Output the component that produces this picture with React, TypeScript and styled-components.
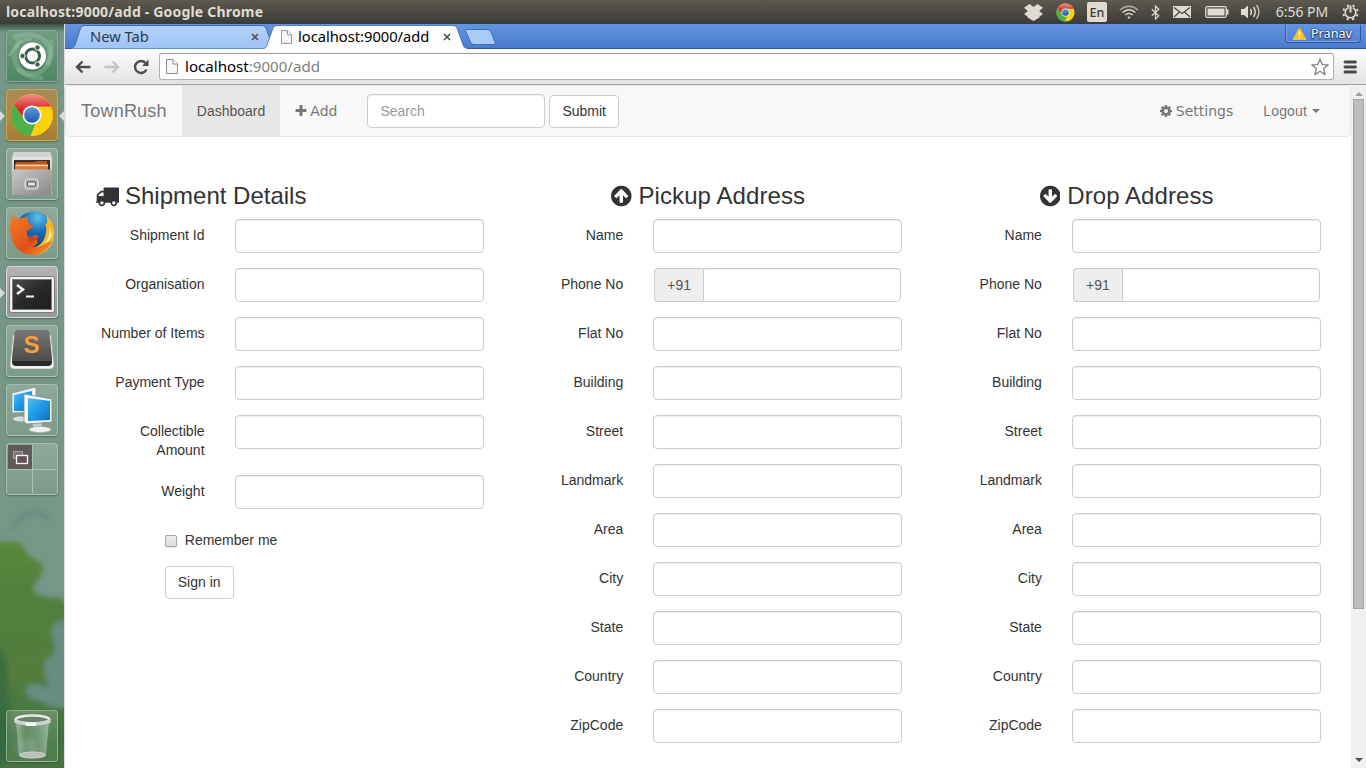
import React from 'react';
import styled, { createGlobalStyle } from 'styled-components';

const ui = `'Noto Sans', 'Open Sans', sans-serif`;
const web = `'Liberation Sans', Arial, sans-serif`;
const iconFallback = `'DejaVu Sans', sans-serif`;

const GlobalStyle = createGlobalStyle`
  *, *::before, *::after { box-sizing: border-box; }
  html, body { margin: 0; height: 100%; overflow: hidden; }
  body { font-family: ${web}; font-size: 14px; color: #333; background: #fff; }
  svg { display: block; flex: none; }
`;

/* ---------- desktop shell ---------- */

const Desktop = styled.div`
  display: flex;
  flex-direction: column;
  width: 1366px;
  height: 768px;
  overflow: hidden;
`;

const TopPanel = styled.header`
  display: flex;
  align-items: center;
  flex: none;
  height: 24px;
  padding: 0 7px 0 6px;
  background: linear-gradient(#5c594f, #3c3b37);
  color: #dfdbd2;
  font-family: ${ui};
`;

const WindowTitle = styled.div`
  flex: 1;
  font-size: 14px;
  font-weight: 700;
  line-height: 24px;
  letter-spacing: 0.19px;
  white-space: nowrap;
`;

const Indicator = styled.div<{ $w: number; $gap: number }>`
  display: flex;
  justify-content: center;
  flex: none;
  width: ${(p) => p.$w}px;
  margin-left: ${(p) => p.$gap}px;
  white-space: nowrap;
`;

const LangBadge = styled.span`
  width: 20px;
  height: 20px;
  border-radius: 2px;
  background: #dfdbd2;
  color: #3c3b37;
  font-size: 12.5px;
  font-weight: 500;
  line-height: 21px;
  text-align: center;
`;

const Clock = styled.span`
  font-size: 14px;
  line-height: 24px;
`;

const Workspace = styled.div`
  display: flex;
  flex: 1;
  min-height: 0;
`;

const Dock = styled.aside`
  position: relative;
  display: flex;
  flex-direction: column;
  flex: none;
  gap: 7px;
  width: 65px;
  padding: 6px 0 6px 6px;
  border-right: 1px solid #d3dfdb;
  background: #769687;
  overflow: hidden;
`;

const Wallpaper = styled.svg`
  position: absolute;
  inset: 0;
`;

type TileTone = 'dash' | 'gold' | 'silver' | 'plain';
const tones: Record<TileTone, [string, string]> = {
  dash: ['linear-gradient(#719d82, #4d8665)', '#86ac96'],
  gold: ['linear-gradient(#a58b59, #b28a3c 55%, #a17c34)', '#d0a755'],
  silver: ['linear-gradient(#b1b3b4, #95999a)', '#d5d8d8'],
  plain: ['linear-gradient(rgba(255,255,255,.18), rgba(255,255,255,.05))', 'rgba(205,224,214,.5)'],
};

const Tile = styled.div<{ $tone: TileTone; $last?: boolean }>`
  position: relative;
  display: flex;
  align-items: center;
  justify-content: center;
  flex: none;
  width: 52px;
  height: 52px;
  margin-top: ${(p) => (p.$last ? 'auto' : '0')};
  border: 1px solid ${(p) => tones[p.$tone][1]};
  border-radius: 4px;
  background: ${(p) => tones[p.$tone][0]};
  box-shadow: 0 1px 2px rgba(30, 60, 45, 0.45);
`;

const Arrow = styled.i<{ $side: 'left' | 'right' }>`
  position: absolute;
  top: 21px;
  ${(p) => (p.$side === 'left' ? 'left: -7px; border-left: 5px solid #d8dcda;' : 'right: -7px; border-right: 5px solid #d8dcda;')}
  border-top: 5px solid transparent;
  border-bottom: 5px solid transparent;
`;

/* ---------- browser chrome ---------- */

const Browser = styled.section`
  display: flex;
  flex-direction: column;
  flex: 1;
  min-width: 0;
`;

const TabStrip = styled.div`
  display: flex;
  flex: none;
  height: 25px;
  padding-left: 6px;
  background: linear-gradient(#6594df, #4a7bce 94%, #2f599f 97%);
  font-family: ${ui};
`;

const Tab = styled.div<{ $w: number; $overlap: number; $pad: number; $active?: boolean }>`
  position: relative;
  display: flex;
  align-items: center;
  flex: none;
  width: ${(p) => p.$w}px;
  height: 25px;
  margin-left: ${(p) => -p.$overlap}px;
  padding: 0 ${(p) => (p.$active ? 17 : 16)}px 0 ${(p) => p.$pad}px;
  color: ${(p) => (p.$active ? '#000' : '#2d3a4d')};
`;

const TabShape = styled.svg`
  position: absolute;
  inset: 0;
`;

const TabTitle = styled.span`
  position: relative;
  flex: 1;
  font-size: 14.7px;
  line-height: 25px;
  white-space: nowrap;
`;

const TabIcon = styled.span`
  position: relative;
  display: flex;
`;

const FavIcon = styled(TabIcon)`
  margin-right: 6px;
`;

const NewTabButton = styled.svg`
  margin-left: -3px;
`;

const ProfileBadge = styled.div`
  display: flex;
  align-items: center;
  gap: 4px;
  width: 76px;
  height: 18px;
  margin: 1px 5px 0 auto;
  padding: 0 6px;
  border: 1px solid #2f5aa6;
  border-top: 0;
  border-radius: 0 0 4px 4px;
  box-shadow: inset 0 -1px 0 rgba(255, 255, 255, 0.25), inset 1px 0 0 rgba(255, 255, 255, 0.2);
  color: #fff;
  font-size: 12.6px;
  line-height: 20px;
  text-shadow: 0 0 1px #1b2c4c, 0 0 2px #1b2c4c, 0 1px 1px #1b2c4c;
`;

const Toolbar = styled.div`
  display: flex;
  align-items: center;
  flex: none;
  height: 36px;
  padding: 0 9px 0 10px;
  border-bottom: 1px solid #a2a2a2;
  background: linear-gradient(#fdfdfd, #e2e2e2);
`;

const NavIcons = styled.div`
  display: flex;
  align-items: center;
  gap: 13px;
  width: 84px;
`;

const Omnibox = styled.div`
  display: flex;
  align-items: center;
  flex: 1;
  height: 27px;
  margin-right: 9px;
  padding: 0 4px 0 6px;
  border: 1px solid #b1b1b1;
  border-top-color: #9c9c9c;
  border-radius: 3px;
  background: #fff;
  font-family: ${ui};
  font-size: 15.1px;
  line-height: 25px;
  color: #808080;
`;

const UrlText = styled.span`
  flex: 1;
  margin-left: 7px;
  b { color: #000; font-weight: 400; }
`;

/* ---------- page ---------- */

const Viewport = styled.div`
  display: flex;
  flex: 1;
  min-height: 0;
`;

const Page = styled.main`
  flex: 1;
  min-width: 0;
  overflow: hidden;
  background: #fff;
  line-height: 19px;
`;

const Scrollbar = styled.div`
  display: flex;
  flex-direction: column;
  align-items: center;
  flex: none;
  width: 15px;
  padding: 7px 0 6px;
  background: #f0f0f0;
`;

const ScrollThumb = styled.div`
  width: 11px;
  height: 510px;
  margin: 3px 0 auto;
  border: 1px solid #a5a5a5;
  background: #bcbcbc;
`;

const ScrollArrow = styled.i<{ $down?: boolean }>`
  border: 4px solid transparent;
  ${(p) => (p.$down ? 'border-bottom: 0; border-top-color: #4f4f4f;' : 'border-top: 0; border-bottom-color: #a0a0a0;')}
`;

const Navbar = styled.nav`
  display: flex;
  align-items: stretch;
  height: 52px;
  padding-right: 15px;
  border: 1px solid #e7e7e7;
  border-radius: 4px;
  background: #f8f8f8;
  color: #777;
`;

const Brand = styled.a`
  padding: 15px;
  font-size: 18px;
  line-height: 20px;
  letter-spacing: 0.22px;
`;

const NavItem = styled.a<{ $active?: boolean; $font?: string; $gap?: number; $spacing?: number }>`
  display: flex;
  align-items: center;
  gap: ${(p) => p.$gap ?? 3}px;
  padding: 0 15px;
  background: ${(p) => (p.$active ? '#e7e7e7' : 'transparent')};
  color: ${(p) => (p.$active ? '#555' : '#777')};
  font-family: ${(p) => p.$font ?? web};
  letter-spacing: ${(p) => p.$spacing ?? 0}px;
`;

const SearchForm = styled.form`
  display: flex;
  gap: 4px;
  margin: 8px auto 0 15px;
`;

const Caret = styled.i`
  margin-left: 2px;
  border: 4px solid transparent;
  border-top-color: #777;
  border-bottom: 0;
`;

const TextInput = styled.input<{ $w?: string }>`
  display: block;
  width: ${(p) => p.$w ?? '100%'};
  min-width: 0;
  height: 34px;
  padding: 6px 12px;
  border: 1px solid #ccc;
  border-radius: 4px;
  outline: 0;
  background: #fff;
  box-shadow: inset 0 1px 1px rgba(0, 0, 0, 0.075);
  font: 14px ${web};
  color: #555;
  &::placeholder { color: #999; opacity: 1; }
`;

const Button = styled.button<{ $top?: number }>`
  height: 33px;
  margin: ${(p) => p.$top ?? 0}px 0 0;
  padding: 0 12px;
  border: 1px solid #ccc;
  border-radius: 4px;
  background: #fff;
  color: #333;
  font: 14px/19px ${web};
`;

const Columns = styled.div`
  display: flex;
  padding: 46px 15px 0;
`;

const Column = styled.section`
  flex: 1 1 0;
  min-width: 0;
`;

const Heading = styled.h3<{ $center?: boolean }>`
  display: flex;
  align-items: center;
  justify-content: ${(p) => (p.$center ? 'center' : 'flex-start')};
  gap: ${(p) => (p.$center ? 7 : 6)}px;
  height: 26px;
  margin: 0 0 10px;
  padding: 0 15px;
  font-size: 24px;
  font-weight: 400;
  line-height: 26px;
  letter-spacing: ${(p) => (p.$center ? 0.08 : 0)}px;
`;

const Group = styled.div`
  display: flex;
  align-items: flex-start;
  margin-bottom: 15px;
`;

const Label = styled.label`
  width: 33.3333%;
  padding: 7px 15px 0;
  text-align: right;
`;

const Field = styled.div`
  width: 66.6667%;
  padding: 0 15px;
`;

const PhoneGroup = styled.div`
  display: flex;
  margin: 0 1px;
  ${TextInput} { border-radius: 0 4px 4px 0; }
`;

const Addon = styled.span`
  flex: none;
  width: 49px;
  height: 34px;
  border: 1px solid #ccc;
  border-right: 0;
  border-radius: 4px 0 0 4px;
  background: #eee;
  color: #555;
  line-height: 32px;
  text-align: center;
`;

const Offset = styled.div`
  margin-bottom: 15px;
  padding-left: calc(16.6667% + 15px);
`;

const CheckLabel = styled.label`
  display: flex;
  align-items: center;
  gap: 8px;
  height: 27px;
  padding-top: 6px;
`;

const Checkbox = styled.input`
  appearance: none;
  width: 12px;
  height: 12px;
  margin: 0;
  border: 1px solid #a5a5a5;
  border-radius: 2px;
  background: linear-gradient(#eee, #dcdcdc);
  box-shadow: 0 1px 1px rgba(0, 0, 0, 0.12);
`;

/* ---------- icons ---------- */

const solid = {
  truck: 'M640 1408q0-52-38-90t-90-38-90 38-38 90 38 90 90 38 90-38 38-90zm-384-512h384v-256h-158q-13 0-22 9l-195 195q-9 9-9 22v30zm1280 512q0-52-38-90t-90-38-90 38-38 90 38 90 90 38 90-38 38-90zm256-1088v1024q0 15-4 26.5t-13.5 18.5-16.5 11.5-23.5 6-22.5 2-25.5 0-22.5-.5q0 106-75 181t-181 75-181-75-75-181h-384q0 106-75 181t-181 75-181-75-75-181h-64q-3 0-22.5.5t-25.5 0-22.5-2-23.5-6-16.5-11.5-13.5-18.5-4-26.5q0-26 19-45t45-19v-320q0-8-.5-35t0-38 2.5-34.5 6.5-37 14-30.5 22.5-30l198-198q19-19 50.5-32t58.5-13h160v-192q0-26 19-45t45-19h1024q26 0 45 19t19 45z',
  up: 'M1412 895q0-27-18-45l-362-362-91-91q-18-18-45-18t-45 18l-91 91-362 362q-18 18-18 45t18 45l91 91q18 18 45 18t45-18l189-189v502q0 26 19 45t45 19h128q26 0 45-19t19-45v-502l189 189q19 19 45 19t45-19l91-91q18-18 18-45zm252 1q0 209-103 385.5t-279.5 279.5-385.5 103-385.5-103-279.5-279.5-103-385.5 103-385.5 279.5-279.5 385.5-103 385.5 103 279.5 279.5 103 385.5z',
  plus: 'M1600 736v192q0 40-28 68t-68 28h-416v416q0 40-28 68t-68 28h-192q-40 0-68-28t-28-68v-416h-416q-40 0-68-28t-28-68v-192q0-40 28-68t68-28h416v-416q0-40 28-68t68-28h192q40 0 68 28t28 68v416h416q40 0 68 28t28 68z',
  cog: 'M1152 896q0-106-75-181t-181-75-181 75-75 181 75 181 181 75 181-75 75-181zm512-109v222q0 12-8 23t-20 13l-185 28q-19 54-39 91 35 50 107 138 10 12 10 25t-9 23q-27 37-99 108t-94 71q-12 0-26-9l-138-108q-44 23-91 38-16 136-29 186-7 28-36 28h-222q-14 0-24.5-8.5t-11.5-21.5l-28-184q-49-16-90-37l-141 107q-10 9-25 9-14 0-25-11-126-114-165-168-7-10-7-23 0-12 8-23 15-21 51-66.5t54-70.5q-27-50-41-99l-183-27q-13-2-21-12.5t-8-23.5v-222q0-12 8-23t19-13l186-28q14-46 39-92-40-57-107-138-10-12-10-24 0-10 9-23 26-36 98.5-107.5t94.5-71.5q13 0 26 10l138 107q44-23 91-38 16-136 29-186 7-28 36-28h222q14 0 24.5 8.5t11.5 21.5l28 184q49 16 90 37l142-107q9-9 24-9 13 0 25 10 129 119 165 170 7 8 7 22 0 12-8 23-15 21-51 66.5t-54 70.5q26 50 41 98l183 28q13 2 21 12.5t8 23.5z',
};

const Solid = ({ name, size, trim, flip }: { name: keyof typeof solid; size: number; trim?: boolean; flip?: boolean }) => (
  <svg
    width={trim ? (size * 1536) / 1792 : size}
    height={size}
    viewBox={trim ? '128 0 1536 1792' : '0 0 1792 1792'}
    fill="currentColor"
  >
    <path d={solid[name]} transform={flip ? 'rotate(180 896 896)' : undefined} />
  </svg>
);

const ChromeLogo = ({ size }: { size: number }) => (
  <svg width={size} height={size} viewBox="0 0 44 44">
    <defs>
      <linearGradient id="cr" x1="0" y1="0" x2="0" y2="1"><stop offset="0" stopColor="#f0938a" /><stop offset=".6" stopColor="#d8262b" /></linearGradient>
      <linearGradient id="cb" x1="0" y1="0" x2="0" y2="1"><stop offset="0" stopColor="#5f9ad6" /><stop offset="1" stopColor="#1d5ba8" /></linearGradient>
    </defs>
    <circle cx="22" cy="22" r="21" fill="#fdd20a" />
    <path d="M3.8 11.5A21 21 0 0 1 41 13.5H22a9 9 0 0 0-8.2 12.3z" fill="url(#cr)" />
    <path d="M3.8 11.5l10.4 15A9 9 0 0 0 25.5 30.5L20.5 43A21 21 0 0 1 3.8 11.5z" fill="#4bb04a" />
    <circle cx="22" cy="22" r="9.500" fill="#f4f6f8" />
    <circle cx="22" cy="22" r="7.800" fill="url(#cb)" />
  </svg>
);

const UbuntuLogo = () => (
  <svg width="50" height="50" viewBox="0 0 50 50" fill="none">
    <g stroke="#c8e6d4" strokeLinecap="round">
      <path d="M8 6Q27 0 38 10Q46 18 41 32" strokeWidth="5" opacity=".22" />
      <path d="M44 11Q47 29 36 39Q25 47 12 39" strokeWidth="5" opacity=".2" />
      <path d="M34 47Q15 47 9 33Q5 21 12 10" strokeWidth="5" opacity=".2" />
      <path d="M3 24Q12 8 24 8" strokeWidth="3" opacity=".25" />
    </g>
    <circle cx="25.500" cy="26.500" r="14" fill="#2e5a43" opacity=".35" />
    <circle cx="25.500" cy="25" r="13.500" fill="#fff" />
    <circle cx="25.500" cy="25" r="7" stroke="#37614c" strokeWidth="3" />
    <g fill="#37614c" stroke="#fff" strokeWidth="1">
      <circle cx="15.500" cy="25" r="2.700" />
      <circle cx="30.500" cy="16.500" r="2.700" />
      <circle cx="30.500" cy="33.500" r="2.700" />
    </g>
  </svg>
);

const FilesIcon = () => (
  <svg width="44" height="46" viewBox="0 0 44 46">
    <defs>
      <linearGradient id="fg" x1="0" y1="0" x2="0" y2="1"><stop offset="0" stopColor="#e9e9e9" /><stop offset="1" stopColor="#b3b3b3" /></linearGradient>
      <linearGradient id="fd" x1="0" y1="0" x2="1" y2="1"><stop offset="0" stopColor="#c9c9c9" /><stop offset="1" stopColor="#878787" /></linearGradient>
    </defs>
    <path d="M4 1h36l2 7v36H2V8z" fill="url(#fg)" />
    <path d="M4 1h36l2 5H2z" fill="#d2d3d2" />
    <path d="M4 9h36v12H4z" fill="#3b2c2a" />
    <path d="M6 11h19l2-1h10v9H6z" fill="#b95420" />
    <path d="M5 13h33v8H5z" fill="#e2793a" />
    <path d="M6 14.500h32" stroke="#fbd9a5" strokeWidth="1.300" />
    <path d="M1.500 18.500h41L41 44H3z" fill="url(#fd)" />
    <rect x="15" y="28" width="13" height="10" rx="2" fill="#aaa" stroke="#e5e5e5" />
    <rect x="17.500" y="31" width="8" height="4" rx=".7" fill="#e6e6e6" stroke="#555" />
  </svg>
);

const FirefoxIcon = () => (
  <svg width="48" height="48" viewBox="0 0 48 48">
    <defs>
      <radialGradient id="fb" cx=".6" cy=".15" r=".9"><stop offset="0" stopColor="#5dc3ea" /><stop offset=".4" stopColor="#1870b8" /><stop offset="1" stopColor="#113267" /></radialGradient>
      <linearGradient id="fo" x1="0" y1="0" x2="1" y2="1"><stop offset="0" stopColor="#ef7d22" /><stop offset=".6" stopColor="#e0511c" /><stop offset="1" stopColor="#f5a125" /></linearGradient>
    </defs>
    <circle cx="26" cy="22" r="19.500" fill="url(#fb)" />
    <path d="M38 6Q48 15 46 28Q43 44 27 46L24 39Q36 37 38 23Q39 18 37 15Q40 15 39 10Z" fill="#f6b52b" />
    <path d="M40 13Q43 20 40 29Q38 34 34 37Q41 34 44 26" fill="#fff0a0" />
    <path d="M4 6Q6 9 10 10Q13 8 16 9L20 7Q19 12 22 15L25 17Q25 19 22 20L19 22Q18 27 21 28Q24 28 28 26Q32 27 29 30Q31 36 24 38Q33 39 38 34L44 32Q38 46 24 46Q9 45 4 31Q0 20 4 6Z" fill="url(#fo)" />
    <path d="M21 28Q25 27 29 30Q25 35 19 31" fill="#c23d17" opacity=".7" />
  </svg>
);

const TerminalIcon = () => (
  <svg width="46" height="44" viewBox="0 -6 46 44">
    <defs><linearGradient id="tg" x1="0" y1="0" x2="1" y2="1"><stop offset="0" stopColor="#4a4a4a" /><stop offset=".5" stopColor="#292929" /><stop offset="1" stopColor="#1d1d1d" /></linearGradient></defs>
    <rect x=".5" y=".5" width="45" height="36" rx="2" fill="#f1f1f1" stroke="#797c7d" />
    <rect x="3.500" y="3.500" width="39" height="30" fill="url(#tg)" stroke="#7d7d7d" />
    <path d="M8 9l6 4.500-6 4.500" fill="none" stroke="#f4f4f4" strokeWidth="2.500" />
    <path d="M17 20.500h8" stroke="#f4f4f4" strokeWidth="2" />
  </svg>
);

const SublimeIcon = () => (
  <svg width="46" height="44" viewBox="0 0 46 44">
    <defs><linearGradient id="sg" x1="0" y1="0" x2="0" y2="1"><stop offset="0" stopColor="#777" /><stop offset="1" stopColor="#4c4c4c" /></linearGradient></defs>
    <path d="M4 6L1 36q0 4 4 4h36q4 0 4-4L42 6z" fill="#f4f4f4" stroke="#9ba59f" strokeWidth=".7" />
    <path d="M4 27h38l1 6q0 4-4 4H7q-4 0-4-4z" fill="#292929" />
    <path d="M9 1h28q3 0 3.500 3L43 29q0 3-3 3H6q-3 0-3-3L5.500 4Q6 1 9 1z" fill="url(#sg)" />
    <text x="22.500" y="24" textAnchor="middle" fontFamily="Liberation Sans, sans-serif" fontWeight="700" fontSize="24" fill="#f8a03a">S</text>
  </svg>
);

const RemoteIcon = () => (
  <svg width="44" height="48" viewBox="0 0 44 48">
    <defs><linearGradient id="rg" x1="0" y1="0" x2="1" y2="1"><stop offset="0" stopColor="#4cc0f5" /><stop offset=".5" stopColor="#1c9ae6" /><stop offset="1" stopColor="#0a70c4" /></linearGradient></defs>
    <ellipse cx="11" cy="33" rx="8" ry="2.500" fill="#d9dddd" />
    <path d="M2 7L26 1v25L2 27z" fill="#eef0f0" stroke="#8b9a94" strokeWidth=".8" />
    <path d="M4 9L22 5v20L4 25z" fill="url(#rg)" />
    <path d="M22 34h9l1 8h-9z" fill="#c4c9c9" />
    <ellipse cx="30" cy="43.500" rx="11" ry="3" fill="#eef0f0" stroke="#a5adaa" strokeWidth=".6" />
    <path d="M14 8l28 5v23l-25 2-3-2z" fill="#f4f5f5" stroke="#7e8d87" strokeWidth=".8" />
    <path d="M18 12l22 3v19l-22 1z" fill="url(#rg)" />
  </svg>
);

const SwitcherIcon = () => (
  <svg width="50" height="50" viewBox="0 0 50 50">
    <rect x="1" y="1" width="24" height="24" fill="#61595a" />
    <path d="M25.500 1v48M1 25.500h48" stroke="#a9c3b5" />
    <rect x="6.500" y="7.500" width="9" height="7" fill="#7a7273" stroke="#aaa2a3" />
    <rect x="9.500" y="11.500" width="11" height="8" fill="#68505c" stroke="#fff" strokeWidth="1.300" />
  </svg>
);

const TrashIcon = () => (
  <svg width="40" height="46" viewBox="0 0 40 46">
    <defs><linearGradient id="bg" x1="0" y1="0" x2="1" y2="0"><stop offset="0" stopColor="#dce6dd" stopOpacity=".5" /><stop offset=".3" stopColor="#7d987f" stopOpacity=".35" /><stop offset=".65" stopColor="#a7bda8" stopOpacity=".35" /><stop offset="1" stopColor="#dce6dd" stopOpacity=".5" /></linearGradient></defs>
    <path d="M4 8h33l-3 34Q20 48 7 42z" fill="url(#bg)" />
    <ellipse cx="20.500" cy="42" rx="13" ry="3" fill="#b9c0b9" stroke="#ced5ce" />
    <ellipse cx="20.500" cy="6.500" rx="17" ry="4" fill="#698266" stroke="#e9eae9" strokeWidth="2.500" />
    <path d="M2.500 6Q20 13 38.500 6v4Q20 16 2.500 10z" fill="#cfd1cf" />
    <path d="M13 9.500h11v3.500H14z" fill="#f7f7f7" />
  </svg>
);

const PageIcon = ({ w, h }: { w: number; h: number }) => (
  <svg width={w} height={h} viewBox="0 0 12 15" fill="#f7f7f7" stroke="#8b8b8b">
    <path d="M.5.5h6.500l4.500 4.500v9.500H.5z" />
    <path d="M7 .5V5h4.500" fill="#fff" />
  </svg>
);

const CloseIcon = () => (
  <svg width="8" height="8" viewBox="0 0 8 8" stroke="#555" strokeWidth="1.700">
    <path d="M1 1l6 6M7 1L1 7" />
  </svg>
);

const light = '#dfdbd2';

const Indicators = () => (
  <>
    <Indicator $w={20} $gap={0}>
      <svg width="19" height="17" viewBox="0 0 19 17" fill={light}>
        <path d="M5.500 0L9.500 3 13.500 0 19 3.700 15.200 7 19 10 15.500 12.500v1L9.500 17 3.500 13.500v-1L0 10 3.800 7 0 3.700z" />
      </svg>
    </Indicator>
    <Indicator $w={20} $gap={12}><ChromeLogo size={19} /></Indicator>
    <Indicator $w={20} $gap={12}><LangBadge>En</LangBadge></Indicator>
    <Indicator $w={20} $gap={12}>
      <svg width="20" height="14" viewBox="0 0 20 14" fill="none" stroke={light} strokeWidth="1.500">
        <path d="M.8 5Q10-2.600 19.200 5" opacity=".65" /><path d="M3.600 7.500Q10 2 16.400 7.500" /><path d="M6.300 10Q10 7 13.700 10" /><path d="M8.300 12L10 14l1.700-2Q10 11 8.300 12z" fill={light} stroke="none" />
      </svg>
    </Indicator>
    <Indicator $w={10} $gap={11}>
      <svg width="9" height="15" viewBox="0 0 9 15" fill="none" stroke={light} strokeWidth="1.200">
        <path d="M.8 4.200l7 6.600L4.500 14V1l3.300 3.200-7 6.600" />
      </svg>
    </Indicator>
    <Indicator $w={18} $gap={13}>
      <svg width="18" height="12" viewBox="0 0 18 12">
        <rect width="18" height="12" fill={light} />
        <path d="M1 1.500l8 6 8-6M1 11l5.500-5M17 11l-5.500-5" fill="none" stroke="#4a4842" strokeWidth="1.300" />
      </svg>
    </Indicator>
    <Indicator $w={24} $gap={14}>
      <svg width="24" height="12" viewBox="0 0 24 12">
        <rect x=".7" y=".7" width="20.600" height="10.600" rx="1.500" fill="none" stroke={light} strokeWidth="1.300" />
        <rect x="2.500" y="2.500" width="17" height="7" fill={light} />
        <path d="M22 3.500h1.500v5H22z" fill={light} />
      </svg>
    </Indicator>
    <Indicator $w={20} $gap={12}>
      <svg width="20" height="16" viewBox="0 0 20 16" fill="none" stroke={light} strokeWidth="1.400">
        <path d="M0 5h3l4-3.500v13L3 11H0z" fill={light} stroke="none" />
        <path d="M9.500 5Q11.500 8 9.500 11" /><path d="M12.500 3Q16 8 12.500 13" /><path d="M15.500 1Q20.500 8 15.500 15" opacity=".8" />
      </svg>
    </Indicator>
    <Indicator $w={54} $gap={14}><Clock>6:56 PM</Clock></Indicator>
    <Indicator $w={17} $gap={13}>
      <svg width="17" height="17" viewBox="0 0 17 17" fill="none" stroke={light}>
        <circle cx="8.500" cy="8.500" r="5.300" strokeWidth="1.600" strokeDasharray="28.500 4.800" transform="rotate(-64 8.500 8.500)" />
        <circle cx="8.500" cy="8.500" r="7.200" strokeWidth="2" strokeDasharray="2.200 3.455" transform="rotate(14 8.500 8.500)" />
        <path d="M8.500 1.500v7" strokeWidth="2" />
      </svg>
    </Indicator>
  </>
);

const Launcher = () => (
  <Dock>
    <Wallpaper width="64" height="744" viewBox="0 24 64 744">
      <defs>
        <filter id="soft" x="-30%" y="-30%" width="160%" height="160%"><feGaussianBlur stdDeviation="2.500" /></filter>
        <linearGradient id="leaf" x1="0" y1="0" x2="0" y2="1"><stop offset="0" stopColor="#5a8a3c" /><stop offset=".2" stopColor="#50803d" /><stop offset=".55" stopColor="#527d3e" /><stop offset=".8" stopColor="#3e7240" /><stop offset="1" stopColor="#52783d" /></linearGradient>
        <linearGradient id="shade" x1="0" y1="0" x2="0" y2="1"><stop offset="0" stopColor="#26382f" stopOpacity=".75" /><stop offset="1" stopColor="#26382f" stopOpacity="0" /></linearGradient>
      </defs>
      <rect y="24" width="64" height="744" fill="#769687" />
      <g filter="url(#soft)">
        <path d="M12 530Q20 513 33 512Q42 512 50 520" fill="none" stroke="#527e77" strokeWidth="4" opacity=".5" />
        <path d="M-10 545Q10 537 22 545Q28 558 42 563Q46 572 34 584Q31 591 38 595Q52 600 61 597Q60 602 80 610V790H-10z" fill="url(#leaf)" />
        <path d="M74 621Q53 618 51 632Q55 645 55 653Q40 661 45 675Q50 684 46 688Q32 678 25 690Q28 701 43 702Q53 711 74 706z" fill="#668d80" />
        <path d="M-8 640Q10 650 8 690Q15 730 2 768H-10z" fill="#2d6240" opacity=".55" />
        <circle cx="27" cy="748" r="10" fill="#6e967e" opacity=".7" />
      </g>
      <rect y="24" width="64" height="8" fill="url(#shade)" />
    </Wallpaper>
    <Tile $tone="dash"><UbuntuLogo /></Tile>
    <Tile $tone="gold"><Arrow $side="left" /><ChromeLogo size={44} /><Arrow $side="right" /></Tile>
    <Tile $tone="plain"><FilesIcon /></Tile>
    <Tile $tone="plain"><FirefoxIcon /></Tile>
    <Tile $tone="silver"><Arrow $side="left" /><TerminalIcon /></Tile>
    <Tile $tone="plain"><SublimeIcon /></Tile>
    <Tile $tone="plain"><RemoteIcon /></Tile>
    <Tile $tone="plain"><SwitcherIcon /></Tile>
    <Tile $tone="plain" $last><TrashIcon /></Tile>
  </Dock>
);

const Tabs = () => (
  <TabStrip>
    <Tab $w={204} $overlap={0} $pad={19}>
      <TabShape width="204" height="25" viewBox="0 0 204 25">
        <defs><linearGradient id="t1" x1="0" y1="0" x2="0" y2="1"><stop offset="0" stopColor="#b4d2fa" /><stop offset="1" stopColor="#9dc4f5" /></linearGradient></defs>
        <path d="M0 24.500Q3 24 4 21L9.500 4Q11 1.500 13 1.500H191Q194 1.500 195 4L201 21Q202 24 204 24.500" fill="url(#t1)" stroke="#3f6db8" />
      </TabShape>
      <TabTitle>New Tab</TabTitle>
      <TabIcon><CloseIcon /></TabIcon>
    </Tab>
    <Tab $w={205} $overlap={12} $pad={18} $active>
      <TabShape width="205" height="25" viewBox="0 0 205 25">
        <path d="M0 25Q3 24 4 21L10 4Q11.500 1.500 14 1.500H190Q193 1.500 194 4L200 21Q201 24.500 205 25" fill="#fdfdfd" stroke="#5a7db5" />
        <path d="M2 24.500h201" stroke="#fdfdfd" />
      </TabShape>
      <FavIcon><PageIcon w={11} h={14} /></FavIcon>
      <TabTitle>localhost:9000/add</TabTitle>
      <TabIcon><CloseIcon /></TabIcon>
    </Tab>
    <NewTabButton width="34" height="25" viewBox="0 0 34 25">
      <path d="M1.500 5.500H22Q25 5.500 26 8l4 10q1 2.500-1 2.500H9Q6.500 20.500 5.500 18L1 8Q0 5.500 1.500 5.500z" fill="#a9cbf7" stroke="#3f6db8" />
    </NewTabButton>
    <ProfileBadge>
      <svg width="15" height="14" viewBox="0 0 15 14">
        <path d="M7.500 1L14 12.500H1z" fill="#fcbf24" stroke="#fcbf24" strokeLinejoin="round" />
        <path d="M7.500 4.500v4.500M7.500 10v1.500" stroke="#fff" strokeWidth="1.500" />
      </svg>
      Pranav
    </ProfileBadge>
  </TabStrip>
);

const addressFields = ['Name', 'Phone No', 'Flat No', 'Building', 'Street', 'Landmark', 'Area', 'City', 'State', 'Country', 'ZipCode'];
const shipmentFields = ['Shipment Id', 'Organisation', 'Number of Items', 'Payment Type', 'Collectible Amount', 'Weight'];

const FormRow = ({ label }: { label: string }) => (
  <Group>
    <Label>{label}</Label>
    <Field>
      {label === 'Phone No' ? (
        <PhoneGroup><Addon>+91</Addon><TextInput /></PhoneGroup>
      ) : (
        <TextInput />
      )}
    </Field>
  </Group>
);

const AddressColumn = ({ title, down }: { title: string; down?: boolean }) => (
  <Column>
    <Heading $center><Solid name="up" size={24} trim flip={down} />{title}</Heading>
    {addressFields.map((f) => <FormRow key={f} label={f} />)}
  </Column>
);

export default function App() {
  return (
    <Desktop>
      <GlobalStyle />
      <TopPanel>
        <WindowTitle>localhost:9000/add - Google Chrome</WindowTitle>
        <Indicators />
      </TopPanel>
      <Workspace>
        <Launcher />
        <Browser>
          <Tabs />
          <Toolbar>
            <NavIcons>
              <svg width="16" height="14" viewBox="0 0 16 14" fill="none" stroke="#4d4d4d" strokeWidth="2.400"><path d="M7.500 1.500L2 7l5.500 5.500M2 7h13.500" /></svg>
              <svg width="16" height="14" viewBox="0 0 16 14" fill="none" stroke="#c4c4c4" strokeWidth="2.400"><path d="M8.500 1.500L14 7l-5.500 5.500M14 7H.5" /></svg>
              <svg width="17" height="16" viewBox="0 0 17 16" fill="none" stroke="#4d4d4d" strokeWidth="2.400"><path d="M13.500 10.500A6 6 0 1 1 12.500 4" /><path d="M15.500.5v6.500H9z" fill="#4d4d4d" stroke="none" /></svg>
            </NavIcons>
            <Omnibox>
              <PageIcon w={12} h={15} />
              <UrlText><b>localhost</b>:9000/add</UrlText>
              <svg width="18" height="18" viewBox="0 0 18 18" fill="#fff" stroke="#777" strokeWidth="1.200" strokeLinejoin="round"><path d="M9 1l2.200 5.600 6 .3-4.700 3.800 1.600 5.900L9 13.300l-5.100 3.300 1.600-5.900L.8 6.900l6-.3z" /></svg>
            </Omnibox>
            <svg width="14" height="14" viewBox="0 0 14 14" stroke="#4a4a4a" strokeWidth="2.800" strokeLinecap="round"><path d="M2 2h10.500M2 7h10.500M2 12h10.500" /></svg>
          </Toolbar>
          <Viewport>
            <Page>
              <Navbar>
                <Brand>TownRush</Brand>
                <NavItem $active>Dashboard</NavItem>
                <NavItem $font={iconFallback}><Solid name="plus" size={14} trim />Add</NavItem>
                <SearchForm>
                  <TextInput $w="178px" placeholder="Search" />
                  <Button type="button" $top={1}>Submit</Button>
                </SearchForm>
                <NavItem $font={iconFallback} $gap={4}><Solid name="cog" size={14} trim />Settings</NavItem>
                <NavItem $spacing={0.15}>Logout<Caret /></NavItem>
              </Navbar>
              <Columns>
                <Column>
                  <Heading><Solid name="truck" size={24} />Shipment Details</Heading>
                  {shipmentFields.map((f) => <FormRow key={f} label={f} />)}
                  <Offset><CheckLabel><Checkbox type="checkbox" />Remember me</CheckLabel></Offset>
                  <Offset><Button type="button">Sign in</Button></Offset>
                </Column>
                <AddressColumn title="Pickup Address" />
                <AddressColumn title="Drop Address" down />
              </Columns>
            </Page>
            <Scrollbar>
              <ScrollArrow />
              <ScrollThumb />
              <ScrollArrow $down />
            </Scrollbar>
          </Viewport>
        </Browser>
      </Workspace>
    </Desktop>
  );
}
